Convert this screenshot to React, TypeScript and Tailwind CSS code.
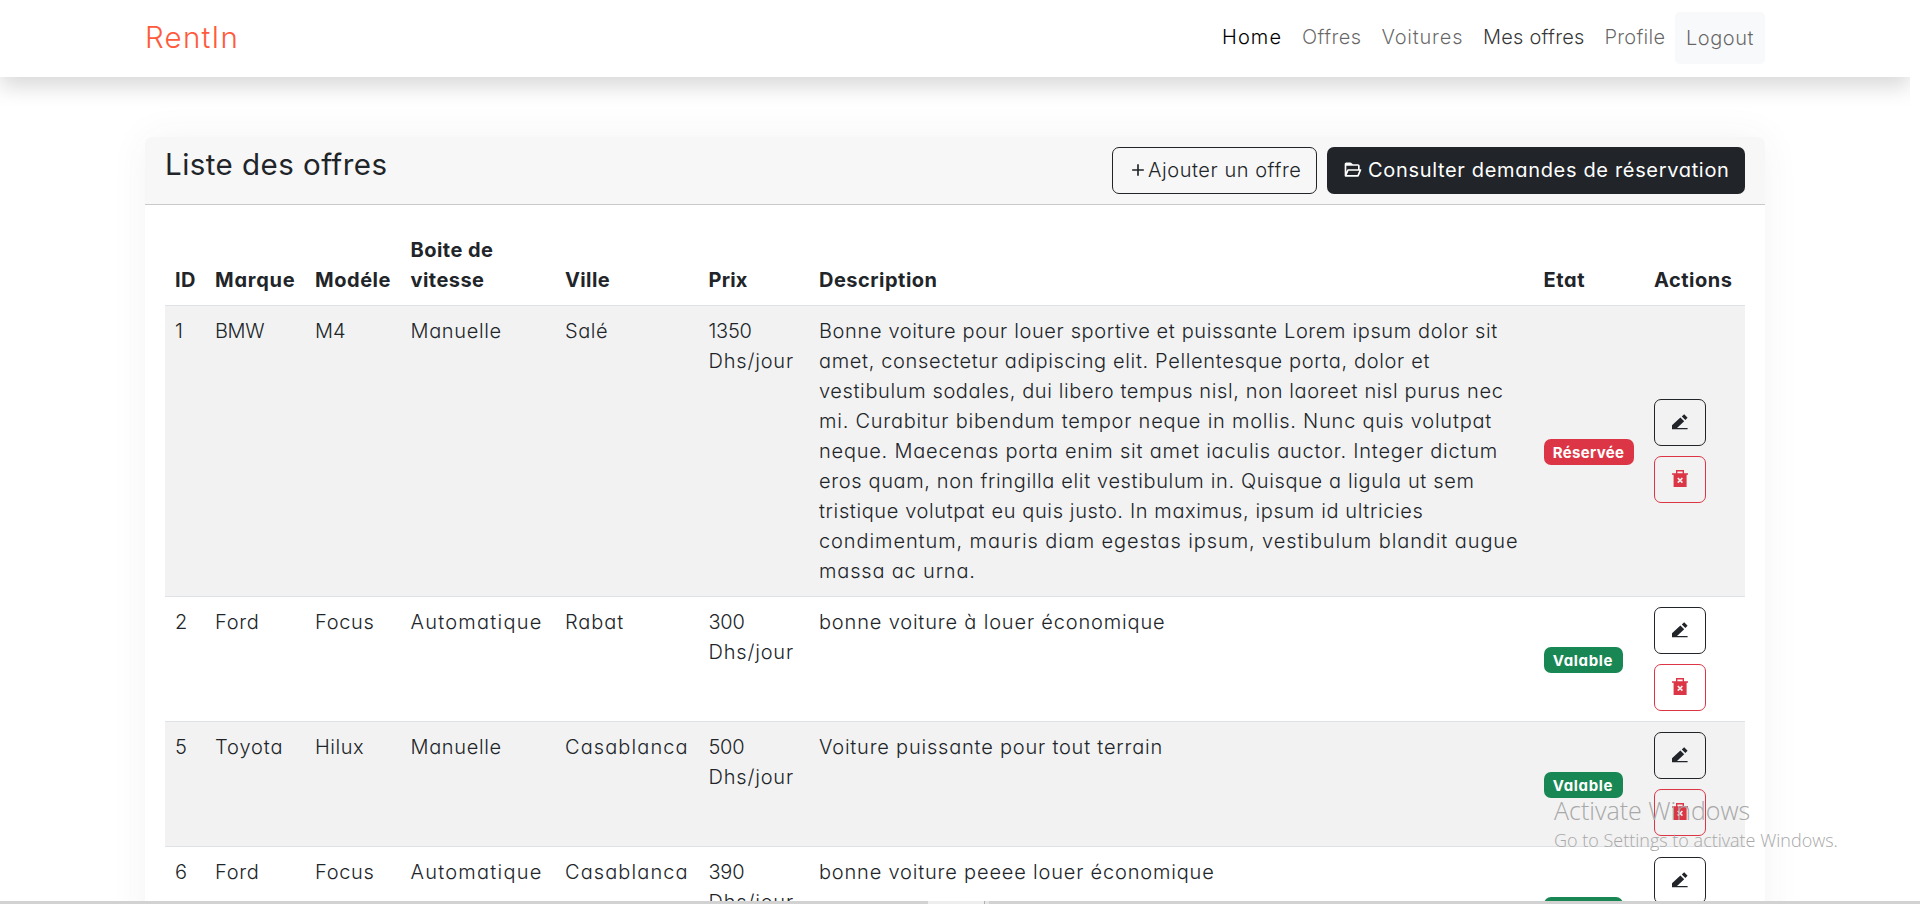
import { BiFolderOpen, BiPlus } from 'react-icons/bi';

type Text = { t: string; ls: string };

type Offer = {
  id: string;
  brand: Text;
  model: Text;
  gearbox: Text;
  city: Text;
  price: Text;
  description: Text[];
  reserved: boolean;
};

const navLinks = [
  { t: 'Home', cls: 'w-[80px] text-black tracking-[1.1px]' },
  { t: 'Offres', cls: 'w-[79.5px] text-black/60 tracking-[0.4px]' },
  { t: 'Voitures', cls: 'w-[101.5px] text-black/60 tracking-[0.78px]' },
  { t: 'Mes offres', cls: 'w-[121.5px] text-black/80 tracking-[0.22px]' },
  { t: 'Profile', cls: 'w-[80.5px] text-black/60 tracking-[0.23px]' },
];

const columns = [
  { t: 'ID', w: 'w-[40px]', ls: 'tracking-[0.4px]' },
  { t: 'Marque', w: 'w-[100px]', ls: 'tracking-[0.75px]' },
  { t: 'Modéle', w: 'w-[95.5px]', ls: 'tracking-[0.55px]' },
  { t: 'Boite de vitesse', w: 'w-[154.5px]', ls: 'tracking-[0.46px]' },
  { t: 'Ville', w: 'w-[143.5px]', ls: 'tracking-[0.38px]' },
  { t: 'Prix', w: 'w-[110.5px]', ls: 'tracking-[0.2px]' },
  { t: 'Description', w: 'w-[724.5px]', ls: 'tracking-[0.49px]' },
  { t: 'Etat', w: 'w-[110.5px]', ls: 'tracking-[0.65px]' },
  { t: 'Actions', w: 'w-[101px]', ls: 'tracking-[0.51px]' },
];

const ford: Text = { t: 'Ford', ls: 'tracking-[0.7px]' };
const focus: Text = { t: 'Focus', ls: 'tracking-[0.68px]' };
const manual: Text = { t: 'Manuelle', ls: 'tracking-[0.64px]' };
const automatic: Text = { t: 'Automatique', ls: 'tracking-[1.24px]' };
const casablanca: Text = { t: 'Casablanca', ls: 'tracking-[1.1px]' };

const offers: Offer[] = [
  {
    id: '1',
    brand: { t: 'BMW', ls: 'tracking-[-0.4px]' },
    model: { t: 'M4', ls: 'tracking-[0px]' },
    gearbox: manual,
    city: { t: 'Salé', ls: 'tracking-[0.52px]' },
    price: { t: '1350', ls: 'tracking-[-0.3px]' },
    description: [
      { t: 'Bonne voiture pour louer sportive et puissante Lorem ipsum dolor sit', ls: 'tracking-[0.631px]' },
      { t: 'amet, consectetur adipiscing elit. Pellentesque porta, dolor et', ls: 'tracking-[0.648px]' },
      { t: 'vestibulum sodales, dui libero tempus nisl, non laoreet nisl purus nec', ls: 'tracking-[0.621px]' },
      { t: 'mi. Curabitur bibendum tempor neque in mollis. Nunc quis volutpat', ls: 'tracking-[0.772px]' },
      { t: 'neque. Maecenas porta enim sit amet iaculis auctor. Integer dictum', ls: 'tracking-[0.77px]' },
      { t: 'eros quam, non fringilla elit vestibulum in. Quisque a ligula ut sem', ls: 'tracking-[0.64px]' },
      { t: 'tristique volutpat eu quis justo. In maximus, ipsum id ultricies', ls: 'tracking-[0.619px]' },
      { t: 'condimentum, mauris diam egestas ipsum, vestibulum blandit augue', ls: 'tracking-[0.908px]' },
      { t: 'massa ac urna.', ls: 'tracking-[0.82px]' },
    ],
    reserved: true,
  },
  {
    id: '2',
    brand: ford,
    model: focus,
    gearbox: automatic,
    city: { t: 'Rabat', ls: 'tracking-[0.95px]' },
    price: { t: '300', ls: 'tracking-[-0.25px]' },
    description: [{ t: 'bonne voiture à louer économique', ls: 'tracking-[0.83px]' }],
    reserved: false,
  },
  {
    id: '5',
    brand: { t: 'Toyota', ls: 'tracking-[0.9px]' },
    model: { t: 'Hilux', ls: 'tracking-[0.5px]' },
    gearbox: manual,
    city: casablanca,
    price: { t: '500', ls: 'tracking-[-0.25px]' },
    description: [{ t: 'Voiture puissante pour tout terrain', ls: 'tracking-[0.789px]' }],
    reserved: false,
  },
  {
    id: '6',
    brand: ford,
    model: focus,
    gearbox: automatic,
    city: casablanca,
    price: { t: '390', ls: 'tracking-[-0.25px]' },
    description: [{ t: 'bonne voiture peeee louer économique', ls: 'tracking-[0.814px]' }],
    reserved: false,
  },
];

function PencilIcon() {
  return (
    <svg width="16" height="16" viewBox="0 0 16 16" fill="currentColor">
      <path d="M0 15.2V11.2L8.4 3.4l3.8 3.8L5 14h10.6v1.2z" />
      <path d="M9.8 2.5 12.2.3 15.6 3.7 13.3 6z" />
    </svg>
  );
}

function TrashIcon() {
  return (
    <svg width="16" height="17" viewBox="0 0 16 17" fill="currentColor">
      <path fillRule="evenodd" d="M4 0h8v3.2h4v1.6h-1.4V17H1.6V4.8H0V3.2h4zM5.4 1.4v1.8h5.2V1.4z" />
      <path d="m5.8 8 4.6 4.6M10.4 8l-4.6 4.6" stroke="#f7eeee" strokeWidth="1.7" />
    </svg>
  );
}

function Line({ text }: { text: Text }) {
  return <span className={`block whitespace-nowrap ${text.ls}`}>{text.t}</span>;
}

function OfferRow({ offer, striped }: { offer: Offer; striped: boolean }) {
  const cell = 'border-b border-[#dee2e6] p-[10px] align-top';
  return (
    <tr className={striped ? 'bg-[#f2f2f2]' : ''}>
      <td className={cell}>{offer.id}</td>
      <td className={cell}><Line text={offer.brand} /></td>
      <td className={cell}><Line text={offer.model} /></td>
      <td className={cell}><Line text={offer.gearbox} /></td>
      <td className={cell}><Line text={offer.city} /></td>
      <td className={cell}>
        <Line text={offer.price} />
        <span className="tracking-[0.81px]">Dhs/jour</span>
      </td>
      <td className={cell}>
        {offer.description.map((d) => <Line key={d.t} text={d} />)}
      </td>
      <td className="border-b border-[#dee2e6] px-[10px] pt-[2px] align-middle">
        {offer.reserved ? (
          <span className="flex h-[26px] w-[90px] items-center justify-center rounded-[7px] bg-[#dc3545] pt-px text-[15px] font-bold tracking-[0.33px] text-white">Réservée</span>
        ) : (
          <span className="flex h-[26px] w-[79px] items-center justify-center rounded-[7px] bg-[#198754] pt-px text-[15px] font-bold tracking-[0.68px] text-white">Valable</span>
        )}
      </td>
      <td className="border-b border-[#dee2e6] p-[10px] align-middle">
        <div className="flex flex-col gap-[10px]">
          <button className="flex h-[47px] w-[52px] items-center justify-center rounded-[7px] border border-[#212529] pb-[2px] text-[#212529]">
            <PencilIcon />
          </button>
          <button className="flex h-[47px] w-[52px] items-center justify-center rounded-[7px] border border-[#dc3545] pb-[2px] text-[#dc3545]">
            <TrashIcon />
          </button>
        </div>
      </td>
    </tr>
  );
}

export default function App() {
  return (
    <div className="relative h-[904px] w-[1920px] overflow-hidden bg-white font-['Inter',sans-serif] text-[20px] leading-[30px] font-light text-[#212529] [font-feature-settings:'cv11']">
      <div className="h-full w-[1910px] overflow-hidden">
        <nav className="flex h-[77px] items-start justify-between bg-white pr-[145px] pl-[145px] shadow-[0_10px_20px_rgba(0,0,0,0.15)]">
          <a className="pt-[15px] text-[29.5px] leading-[45px] tracking-[1.25px] text-[#ff5a3c]">RentIn</a>
          <div className="flex pt-3">
            {navLinks.map((l) => (
              <a key={l.t} className={`py-[10px] pl-[10px] whitespace-nowrap ${l.cls}`}>{l.t}</a>
            ))}
            <button className="h-[52px] w-[90px] rounded-[5px] bg-[#f8f9fa] pb-px tracking-[0.53px] text-black/60">Logout</button>
          </div>
        </nav>

        <main className="px-[145px] pt-[60px]">
          <section className="rounded-[7px] bg-white shadow-[0_0_38px_rgba(8,60,40,0.06)]">
            <header className="flex h-[68px] items-start justify-between rounded-t-[7px] border-b border-[#c8c9ca] bg-[#f7f7f7] px-5 pt-[10px]">
              <h5 className="text-[29.5px] leading-[35px] font-normal tracking-[0.46px]">Liste des offres</h5>
              <div className="flex gap-[10px]">
                <button className="flex h-[47px] w-[205px] items-center rounded-[7px] border border-[#212529] pb-px pl-[15px] whitespace-nowrap">
                  <BiPlus className="size-5" />
                  <span className="tracking-[0.55px]">Ajouter un offre</span>
                </button>
                <button className="flex h-[47px] w-[418px] items-center gap-[5px] rounded-[7px] bg-[#212529] pb-px pl-4 font-normal whitespace-nowrap text-white">
                  <BiFolderOpen className="size-5" />
                  <span className="tracking-[0.67px]">Consulter demandes de réservation</span>
                </button>
              </div>
            </header>
            <div className="p-5">
              <table className="w-[1580px] table-fixed border-separate border-spacing-0">
                <thead>
                  <tr>
                    {columns.map((c) => (
                      <th key={c.t} className={`border-b border-[#dee2e6] p-[10px] text-left align-bottom font-bold ${c.w} ${c.ls}`}>
                        {c.t === 'Boite de vitesse' ? <>Boite de<br />vitesse</> : c.t}
                      </th>
                    ))}
                  </tr>
                </thead>
                <tbody>
                  {offers.map((o, i) => <OfferRow key={o.id} offer={o} striped={i % 2 === 0} />)}
                </tbody>
              </table>
            </div>
          </section>
        </main>
      </div>

      <div className="pointer-events-none absolute top-[792px] left-[1554px] font-['Open_Sans',sans-serif] whitespace-nowrap text-[#a8a8a8]">
        <p className="text-[25px] leading-9">Activate Windows</p>
        <p className="text-[18px] leading-6">Go to Settings to activate Windows.</p>
      </div>

      <div className="absolute bottom-0 left-0 flex h-[3px] w-full bg-[#d2d2d2]">
        <span className="ml-[928px] w-[56px] bg-[#eeeeee]" />
        <span className="w-px bg-[#b0b0b0]" />
        <span className="w-1 bg-[#e4e4e4]" />
      </div>
    </div>
  );
}
